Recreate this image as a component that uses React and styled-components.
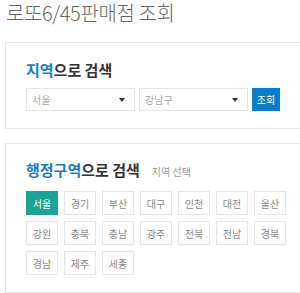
import React from "react";
import styled, { createGlobalStyle } from "styled-components";

const Global = createGlobalStyle`
  html, body { margin: 0; padding: 0; background: #fff; overflow: hidden; }
  body { font-family: "Noto Sans CJK KR", "Noto Sans", sans-serif; }
`;

const Page = styled.div`
  padding: 1px 0 0 5px;
  width: 330px;
`;

const Title = styled.h1`
  width: max-content;
  margin: 0 0 17px 1px;
  font-size: 20px;
  line-height: 24px;
  font-weight: 300;
  color: #666;
  letter-spacing: -0.4px;
`;

const Box = styled.section`
  border: 1px solid #e6e6e6;
  padding: ${(p) => p.$pad};
  background: #fff;
  & + & {
    margin-top: 14px;
  }
`;

const Heading = styled.h2`
  margin: 0;
  font-size: 15px;
  line-height: 20px;
  font-weight: 700;
  color: #333;
  display: flex;
  align-items: baseline;
  gap: 12px;
`;

const Accent = styled.span`
  color: #1a7dc3;
`;

const Sub = styled.span`
  font-size: 10px;
  font-weight: 400;
  color: #999;
`;

const SearchRow = styled.div`
  display: flex;
  gap: 4px;
  margin-top: 8px;
`;

const Select = styled.div`
  width: 109px;
  height: 23px;
  box-sizing: border-box;
  border: 1px solid #e6e6e6;
  display: flex;
  align-items: center;
  justify-content: space-between;
  padding: 0 9px 0 5px;
  font-size: 10px;
  color: #aaa;
`;

const Arrow = styled.span`
  width: 0;
  height: 0;
  border-left: 3px solid transparent;
  border-right: 3px solid transparent;
  border-top: 4px solid #333;
`;

const Button = styled.button`
  width: 28px;
  height: 23px;
  border: 0;
  margin: 0;
  padding: 0;
  background: #0a7ecb;
  color: #fff;
  font-family: inherit;
  font-size: 10px;
`;

const Grid = styled.div`
  display: grid;
  grid-template-columns: repeat(7, 32px);
  grid-auto-rows: 24px;
  gap: 6px;
  margin-top: 9px;
`;

const Region = styled.div`
  box-sizing: border-box;
  border: 1px solid ${(p) => (p.$active ? "#1aa396" : "#e6e6e6")};
  background: ${(p) => (p.$active ? "#1aa396" : "#fff")};
  color: ${(p) => (p.$active ? "#fff" : "#888")};
  font-size: 10px;
  display: flex;
  align-items: center;
  justify-content: center;
`;

const regions = [
  "서울", "경기", "부산", "대구", "인천", "대전", "울산",
  "강원", "충북", "충남", "광주", "전북", "전남", "경북",
  "경남", "제주", "세종",
];

export default function App() {
  return (
    <Page>
      <Global />
      <Title>로또6/45판매점 조회</Title>
      <Box $pad="17px 20px 17px 20px">
        <Heading>
          <span>
            <Accent>지역</Accent>으로 검색
          </span>
        </Heading>
        <SearchRow>
          <Select>
            서울<Arrow />
          </Select>
          <Select>
            강남구<Arrow />
          </Select>
          <Button>조회</Button>
        </SearchRow>
      </Box>
      <Box $pad="16px 20px 17px 20px">
        <Heading>
          <span>
            <Accent>행정구역</Accent>으로 검색
          </span>
          <Sub>지역 선택</Sub>
        </Heading>
        <Grid>
          {regions.map((r, i) => (
            <Region key={r} $active={i === 0}>
              {r}
            </Region>
          ))}
        </Grid>
      </Box>
    </Page>
  );
}
